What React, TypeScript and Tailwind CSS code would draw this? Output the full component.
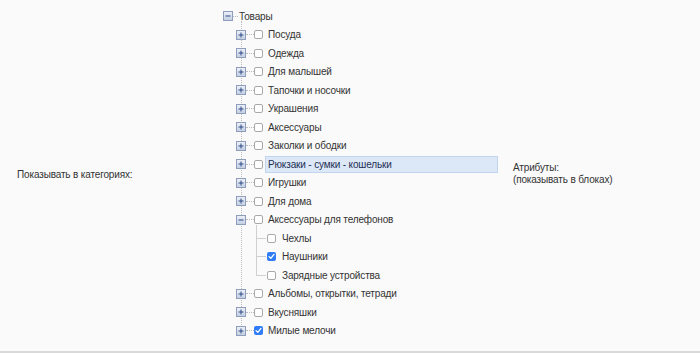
import React from "react";

const font = { fontFamily: '"Liberation Sans", Arial, Helvetica, sans-serif' };

function Expander({ open }: { open: boolean }) {
  return (
    <svg width="10" height="10" viewBox="0 0 10 10" className="shrink-0 block">
      <defs>
        <linearGradient id="eg" x1="0" y1="0" x2="0" y2="1">
          <stop offset="0" stopColor="#eef2f9" />
          <stop offset="1" stopColor="#c3cee2" />
        </linearGradient>
      </defs>
      <rect x="0.5" y="0.5" width="9" height="9" fill="url(#eg)" stroke="#8d9dbb" />
      <line x1="2.5" y1="5" x2="7.5" y2="5" stroke="#2c4a86" strokeWidth="1" />
      {!open && <line x1="5" y1="2.5" x2="5" y2="7.5" stroke="#2c4a86" strokeWidth="1" />}
    </svg>
  );
}

function Checkbox({ checked }: { checked?: boolean }) {
  if (checked) {
    return (
      <span className="shrink-0 w-[9px] h-[9px] rounded-[2px] bg-[#2f7cf6] flex items-center justify-center">
        <svg width="7" height="7" viewBox="0 0 7 7">
          <path d="M1 3.6 L2.8 5.3 L6 1.4" fill="none" stroke="#fff" strokeWidth="1.3" strokeLinecap="round" strokeLinejoin="round" />
        </svg>
      </span>
    );
  }
  return <span className="shrink-0 block w-[9px] h-[9px] rounded-[2px] bg-white border border-[#a9a9a9]" />;
}

type Node = { label: string; checked?: boolean; open?: boolean; highlight?: boolean; children?: Node[] };

const items: Node[] = [
  { label: "Посуда" },
  { label: "Одежда" },
  { label: "Для малышей" },
  { label: "Тапочки и носочки" },
  { label: "Украшения" },
  { label: "Аксессуары" },
  { label: "Заколки и ободки" },
  { label: "Рюкзаки - сумки - кошельки", highlight: true },
  { label: "Игрушки" },
  { label: "Для дома" },
  {
    label: "Аксессуары для телефонов",
    open: true,
    children: [
      { label: "Чехлы" },
      { label: "Наушники", checked: true },
      { label: "Зарядные устройства" },
    ],
  },
  { label: "Альбомы, открытки, тетради" },
  { label: "Вкусняшки" },
  { label: "Милые мелочи", checked: true },
];

function Label({ text, highlight }: { text: string; highlight?: boolean }) {
  return (
    <span
      className={
        "ml-[2px] flex-1 h-[17px] flex items-center pl-[2px] border whitespace-nowrap " +
        (highlight ? "bg-[#dce8f8] border-[#c2d5ef] text-[#1d2f52]" : "border-transparent")
      }
    >
      {text}
    </span>
  );
}

export default function App() {
  return (
    <div
      className="w-[700px] h-[353px] bg-[#fafafa] border-b-2 border-[#d9d9d9] flex text-[10px] tracking-[-0.15px] text-[#333]"
      style={font}
    >
      <div className="w-[223px] shrink-0 pl-[17px] flex items-center pb-[3px]">
        Показывать в категориях:
      </div>

      <div className="w-[275px] shrink-0 pt-[7px]">
        <div className="h-[18.5px] flex items-center">
          <Expander open />
          <span className="w-[5px] border-t border-dotted border-[#bdbdbd]" />
          <span className="ml-[1px]">Товары</span>
        </div>
        <div className="relative">
          <span className="absolute left-[18px] top-[-5px] bottom-[9px] border-l border-dotted border-[#bdbdbd]" />
          {items.map((n) => (
            <div key={n.label}>
              <div className="relative h-[18.5px] flex items-center pl-[13px]">
                <Expander open={!!n.open} />
                <span className="w-[8px] border-t border-dotted border-[#bdbdbd]" />
                <Checkbox checked={n.checked} />
                <Label text={n.label} highlight={n.highlight} />
              </div>
              {n.children && (
                <div className="relative">
                  <span className="absolute left-[33px] top-[-4px] bottom-[9px] border-l border-solid border-[#d0d0d0]" />
                  {n.children.map((c) => (
                    <div key={c.label} className="h-[18.5px] flex items-center pl-[34px]">
                      <span className="w-[9px] border-t border-solid border-[#d0d0d0]" />
                      <span className="ml-[1px] flex">
                        <Checkbox checked={c.checked} />
                      </span>
                      <span className="ml-[6px] whitespace-nowrap">{c.label}</span>
                    </div>
                  ))}
                </div>
              )}
            </div>
          ))}
        </div>
      </div>

      <div className="ml-[15px] flex flex-col justify-center leading-[12px] pb-[4px]">
        <div>Атрибуты:</div>
        <div>(показывать в блоках)</div>
      </div>
    </div>
  );
}
